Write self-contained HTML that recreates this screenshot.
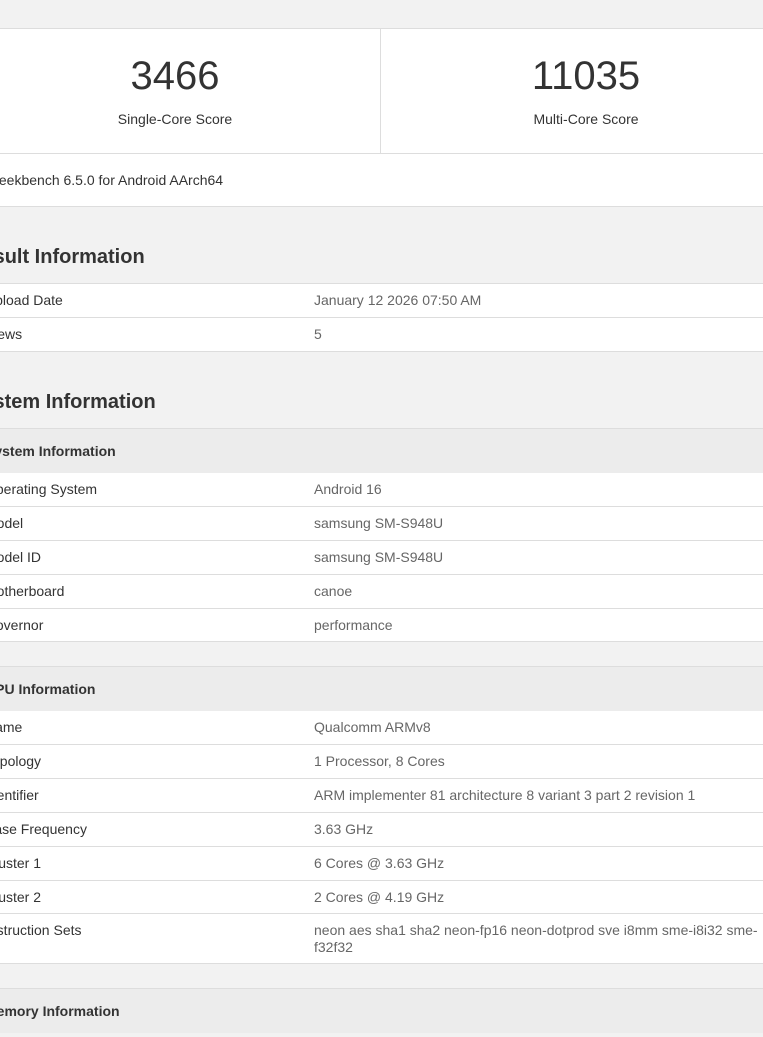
<!DOCTYPE html>
<html><head><style>
body{margin:0;width:763px;height:1037px;overflow:hidden;background:#f2f2f2;font-family:"Liberation Sans",Arial,sans-serif;color:#333;position:relative}
.abs{position:absolute}
.panel{position:absolute;left:-20px;width:800px;background:#fff;border-top:1px solid #ddd;border-bottom:1px solid #ddd;box-sizing:border-box}
.row{position:absolute;left:0;width:800px;height:34px;border-top:1px solid #ddd;box-sizing:border-box;font-size:14px}
.row .k{position:absolute;left:5px;top:8px;color:#333}
.row .v{position:absolute;left:334px;top:8px;color:#666;width:470px;line-height:17px}
.hdr{position:absolute;left:0;width:800px;height:44px;background:#ececec;font-size:14px;font-weight:bold}
.hdr span{position:absolute;left:5px;top:14px}
h2{position:absolute;margin:0;font-size:20px;font-weight:bold;color:#333}
</style></head><body>
<div class="panel" style="top:28px;height:126px;background:#fff"></div>
<div class="abs" style="left:380px;top:28px;width:1px;height:125px;background:#ddd"></div>
<div class="abs" style="left:0;top:54px;width:350px;text-align:center;font-size:40px;color:#333">3466</div>
<div class="abs" style="left:0;top:111px;width:350px;text-align:center;font-size:14px">Single-Core Score</div>
<div class="abs" style="left:380px;top:54px;width:412px;text-align:center;font-size:40px;color:#333">11035</div>
<div class="abs" style="left:380px;top:111px;width:412px;text-align:center;font-size:14px">Multi-Core Score</div>
<div class="panel" style="top:153px;height:54px"></div>
<div class="abs" style="left:-12px;top:172px;font-size:14px">Geekbench 6.5.0 for Android AArch64</div>

<h2 style="left:-32px;top:246px">Result Information</h2>
<div class="panel" style="top:283px;height:69px;border-top:none">
<div class="row" style="top:0"><span class="k">Upload Date</span><span class="v">January 12 2026 07:50 AM</span></div>
<div class="row" style="top:34px"><span class="k">Views</span><span class="v">5</span></div>
</div>

<h2 style="left:-31px;top:391px">System Information</h2>
<div class="panel" style="top:428px;height:214px">
<div class="hdr" style="top:0"><span>System Information</span></div>
<div class="row" style="top:44px;border-top:none"><span class="k">Operating System</span><span class="v">Android 16</span></div>
<div class="row" style="top:77px"><span class="k">Model</span><span class="v">samsung SM-S948U</span></div>
<div class="row" style="top:111px"><span class="k">Model ID</span><span class="v">samsung SM-S948U</span></div>
<div class="row" style="top:145px"><span class="k">Motherboard</span><span class="v">canoe</span></div>
<div class="row" style="top:179px"><span class="k">Governor</span><span class="v">performance</span></div>
</div>

<div class="panel" style="top:666px;height:298px">
<div class="hdr" style="top:0"><span>CPU Information</span></div>
<div class="row" style="top:44px;border-top:none"><span class="k">Name</span><span class="v">Qualcomm ARMv8</span></div>
<div class="row" style="top:77px"><span class="k">Topology</span><span class="v">1 Processor, 8 Cores</span></div>
<div class="row" style="top:111px"><span class="k">Identifier</span><span class="v">ARM implementer 81 architecture 8 variant 3 part 2 revision 1</span></div>
<div class="row" style="top:145px"><span class="k">Base Frequency</span><span class="v">3.63 GHz</span></div>
<div class="row" style="top:179px"><span class="k">Cluster 1</span><span class="v">6 Cores @ 3.63 GHz</span></div>
<div class="row" style="top:213px"><span class="k">Cluster 2</span><span class="v">2 Cores @ 4.19 GHz</span></div>
<div class="row" style="top:246px;height:51px"><span class="k">Instruction Sets</span><span class="v" style="width:450px">neon aes sha1 sha2 neon-fp16 neon-dotprod sve i8mm sme-i8i32 sme-f32f32</span></div>
</div>

<div class="panel" style="top:988px;height:45px;border-bottom:none">
<div class="hdr" style="top:0"><span>Memory Information</span></div>
</div>
</body></html>
